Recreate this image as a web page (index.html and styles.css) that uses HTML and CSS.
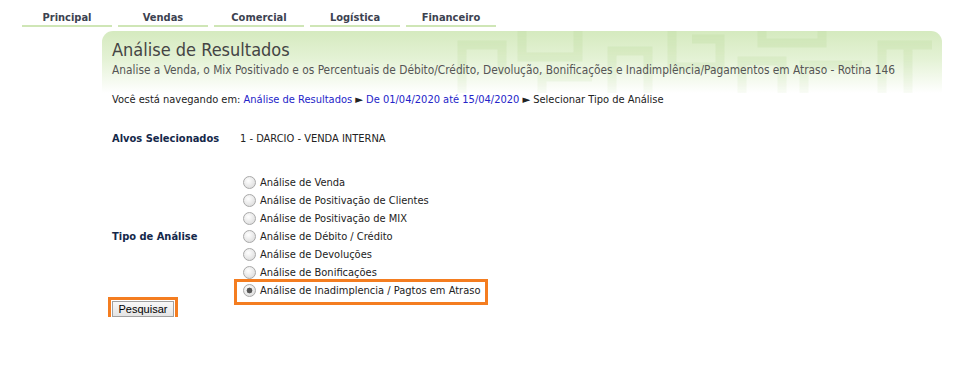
FILE: index.html
```html
<!DOCTYPE html>
<html lang="pt-BR">
<head>
    <meta charset="UTF-8">
    <title>Análise de Resultados - Rotina 146</title>
    <link rel="stylesheet" href="styles.css">
</head>
<body>

    <nav class="tabs">
        <a class="tab">Principal</a>
        <a class="tab">Vendas</a>
        <a class="tab">Comercial</a>
        <a class="tab">Logística</a>
        <a class="tab">Financeiro</a>
    </nav>

    <div class="banner">
        <svg class="banner-art" width="600" height="62" viewBox="0 0 600 62">
            <g fill="none" stroke="#c6e0aa" stroke-width="9">
                <path d="M120 70 V14 H160 V44"/>
                <path d="M180 -4 V26 H236 V-4"/>
                <path d="M200 70 V46 H250"/>
                <path d="M270 70 V20 H306 V70"/>
                <path d="M330 -4 V36 H378 V8 H350"/>
                <path d="M400 70 V30 H440 V70"/>
                <path d="M420 -4 V12 H480 V-4"/>
                <path d="M462 70 V34 H520"/>
                <path d="M540 70 V14 H590"/>
                <path d="M566 14 V70"/>
            </g>
        </svg>
        <h1>Análise de Resultados</h1>
        <p class="subtitle">Analise a Venda, o Mix Positivado e os Percentuais de Débito/Crédito, Devolução, Bonificações e Inadimplência/Pagamentos em Atraso - Rotina 146</p>
    </div>

    <p class="crumbs">Você está navegando em: <a href="#">Análise de Resultados</a> ► <a href="#">De 01/04/2020 até 15/04/2020</a> ► Selecionar Tipo de Análise</p>

    <form class="filtro">
        <div class="row row-alvos">
            <div class="field-label">Alvos Selecionados</div>
            <div class="field-value">1 - DARCIO - VENDA INTERNA</div>
        </div>
        <div class="row row-tipo">
            <div class="field-label">Tipo de Análise</div>
            <div class="options">
                <label class="option"><input type="radio" name="tipo"> Análise de Venda</label>
                <label class="option"><input type="radio" name="tipo"> Análise de Positivação de Clientes</label>
                <label class="option"><input type="radio" name="tipo"> Análise de Positivação de MIX</label>
                <label class="option"><input type="radio" name="tipo"> Análise de Débito / Crédito</label>
                <label class="option"><input type="radio" name="tipo"> Análise de Devoluções</label>
                <label class="option"><input type="radio" name="tipo"> Análise de Bonificações</label>
                <label class="option marked"><input type="radio" name="tipo" checked> Análise de Inadimplencia / Pagtos em Atraso</label>
            </div>
        </div>
        <button type="button" class="btn">Pesquisar</button>
    </form>

</body>
</html>
```

FILE: styles.css
```css
body {
    margin: 0;
    font-family: "DejaVu Sans Condensed", "DejaVu Sans", Verdana, sans-serif;
    font-size: 11px;
    color: #222;
    background: #fff;
}
.tabs {
    display: flex;
    gap: 6px;
    padding: 10px 0 0 22px;
}
.tab {
    width: 90px;
    text-align: center;
    font-weight: bold;
    color: #3c4250;
    line-height: 15px;
    border-bottom: 2px solid #cfe6b6;
}
.banner {
    position: relative;
    overflow: hidden;
    height: 62px;
    margin: 4px 22px 0 102px;
    padding: 8px 10px 0;
    box-sizing: border-box;
    border-radius: 11px 11px 0 0;
    background: linear-gradient(#d5eabf, #e4f2d5 45%, #fff);
}
.banner-art {
    position: absolute;
    right: 0;
    top: 0;
    opacity: 0.5;
    -webkit-mask-image: linear-gradient(#000, rgba(0, 0, 0, 0.2));
    mask-image: linear-gradient(#000, rgba(0, 0, 0, 0.2));
}
.banner h1 {
    position: relative;
    margin: 0;
    font-weight: normal;
    font-size: 18px;
    color: #444;
}
.subtitle {
    position: relative;
    margin: 3px 0 0;
    font-size: 11.8px;
    color: #555;
    white-space: nowrap;
}
.crumbs {
    margin: 0 0 0 112px;
    line-height: 14px;
}
.crumbs a {
    color: #2424c8;
    text-decoration: none;
}
.filtro {
    margin: 25px 0 0 112px;
}
.row {
    display: flex;
    align-items: center;
}
.field-label {
    width: 128px;
    font-weight: bold;
    color: #14284a;
}
.row-tipo {
    margin-top: 28px;
}
.options {
    display: flex;
    flex-direction: column;
    padding-left: 3px;
}
.option {
    position: relative;
    display: flex;
    align-items: center;
    height: 18px;
}
.option input {
    -webkit-appearance: none;
    appearance: none;
    box-sizing: border-box;
    margin: 0 4px 0 0;
    width: 13px;
    height: 13px;
    border: 1px solid #a9a9a9;
    border-radius: 50%;
    background: radial-gradient(circle at 40% 35%, #fff, #e2e2e2 70%, #d0d0d0);
}
.option input:checked {
    background: radial-gradient(circle, #555 0 2.2px, #8a8a8a 2.8px, transparent 3.2px),
                radial-gradient(circle at 40% 35%, #fff, #e2e2e2 70%, #d0d0d0);
}
.option.marked::after {
    content: "";
    position: absolute;
    top: -2px;
    right: -8px;
    bottom: -6px;
    left: -9px;
    border: 3px solid #f47d20;
    pointer-events: none;
}
.btn {
    display: block;
    width: 62px;
    height: 16px;
    margin: 2px 0 0;
    padding: 0;
    font-family: "Liberation Sans", Arial, sans-serif;
    font-size: 11px;
    color: #000;
    background: linear-gradient(#f8f8f8, #e4e4e4);
    border: 1px solid #a0a0a0;
    outline: 3px solid #f47d20;
    outline-offset: 1px;
}
```
